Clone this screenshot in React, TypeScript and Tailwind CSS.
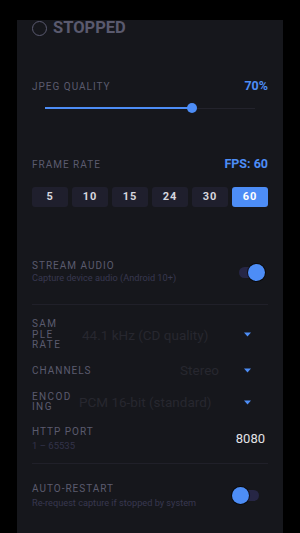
import React from "react";

const BLUE = "bg-[#4d8df6]";

function Label({ children }: { children: React.ReactNode }) {
  return (
    <div className="text-[10px] leading-[12px] tracking-[0.1em] text-[#5b5b6e] uppercase">
      {children}
    </div>
  );
}

function Caret() {
  return (
    <svg width="7" height="5" viewBox="0 0 7 5" className="shrink-0">
      <path d="M0 0.5 L7 0.5 L3.5 4.5 Z" fill="#4d8df6" />
    </svg>
  );
}

function Toggle({ on }: { on: boolean }) {
  return (
    <div className="relative w-[34px] h-[18px] mr-[2px] flex items-center">
      <div className="absolute left-[7px] right-[7px] h-[11px] rounded-full bg-[#262645]" />
      <div
        className={`absolute top-[0.5px] w-[17px] h-[17px] rounded-full ${BLUE} shadow-[0_0_0_1px_rgba(0,0,0,0.6)] ${
          on ? "left-[16px]" : "left-0"
        }`}
      />
    </div>
  );
}

export default function App() {
  const rates = [5, 10, 15, 24, 30, 60];
  return (
    <div
      className="w-[300px] h-[533px] bg-black overflow-hidden pt-[20px]"
      style={{ fontFamily: "Roboto, 'Noto Sans', sans-serif" }}
    >
      <div className="ml-[17px] w-[266px] h-[513px] bg-[#16171c] px-[15px]">
        {/* status */}
        <div className="h-[16px] flex items-center gap-[6px]">
          <div className="w-[15px] h-[15px] rounded-full border-[1.5px] border-[#5a5a70]" />
          <span className="text-[16.5px] leading-[16px] font-bold text-[#5a5a6e]">
            STOPPED
          </span>
        </div>

        {/* jpeg quality */}
        <div className="mt-[44px] h-[13px] flex items-center justify-between">
          <Label>JPEG Quality</Label>
          <span className="text-[12.5px] font-bold text-[#4d8df6]">70%</span>
        </div>
        <div className="mt-[10px] h-[10px] mx-[13px] relative flex items-center">
          <div className="absolute left-0 right-0 h-[1px] bg-[#23232c]" />
          <div className="absolute left-0 w-[147px] h-[2px] bg-[#4d8df6]" />
          <div className="absolute left-[142px] w-[10px] h-[10px] rounded-full bg-[#4d8df6]" />
        </div>

        {/* frame rate */}
        <div className="mt-[45px] h-[13px] flex items-center justify-between">
          <Label>Frame Rate</Label>
          <span className="text-[12.5px] font-bold text-[#4d8df6]">FPS: 60</span>
        </div>
        <div className="mt-[16px] grid grid-cols-6 gap-[4px]">
          {rates.map((r) => (
            <div
              key={r}
              className={`h-[20px] rounded-[3px] flex items-center justify-center text-[11px] font-bold tracking-[0.08em] ${
                r === 60 ? "bg-[#4d8df6] text-white" : "bg-[#1f1f2d] text-[#d6d6de]"
              }`}
            >
              {r}
            </div>
          ))}
        </div>

        {/* stream audio */}
        <div className="mt-[53px] flex items-center justify-between">
          <div>
            <Label>Stream Audio</Label>
            <div className="text-[9.2px] leading-[12px] text-[#383850]">
              Capture device audio (Android 10+)
            </div>
          </div>
          <Toggle on />
        </div>

        <div className="mt-[20px] h-px bg-[#202029]" />

        {/* sample rate */}
        <div className="mt-[14px] flex items-center">
          <div className="w-[50px] text-[10px] leading-[10.5px] tracking-[0.14em] text-[#5b5b6e]">
            SAM
            <br />
            PLE
            <br />
            RATE
          </div>
          <div className="flex-1 text-[13.5px] text-[#27272f]">44.1 kHz (CD quality)</div>
          <Caret />
          <div className="w-[17px]" />
        </div>

        {/* channels */}
        <div className="mt-[14px] h-[12px] flex items-center">
          <Label>Channels</Label>
          <div className="flex-1 text-right pr-[25px] text-[13.5px] text-[#27272f]">Stereo</div>
          <Caret />
          <div className="w-[17px]" />
        </div>

        {/* encoding */}
        <div className="mt-[15px] flex items-center">
          <div className="w-[47px] text-[10px] leading-[10.5px] tracking-[0.14em] text-[#5b5b6e]">
            ENCOD
            <br />
            ING
          </div>
          <div className="flex-1 text-[13.5px] text-[#27272f]">PCM 16-bit (standard)</div>
          <Caret />
          <div className="w-[17px]" />
        </div>

        {/* http port */}
        <div className="mt-[13px] flex items-center justify-between">
          <div>
            <Label>HTTP Port</Label>
            <div className="mt-[2px] text-[9.5px] leading-[12px] text-[#33334a]">1 – 65535</div>
          </div>
          <span className="mr-[3px] text-[13px] text-[#e2e2e6]">8080</span>
        </div>

        <div className="mt-[11px] h-px bg-[#202029]" />

        {/* auto restart */}
        <div className="mt-[19px] flex items-center justify-between">
          <div>
            <Label>Auto-Restart</Label>
            <div className="mt-[2px] text-[9.2px] leading-[12px] text-[#383850]">
              Re-request capture if stopped by system
            </div>
          </div>
          <Toggle on={false} />
        </div>
      </div>
    </div>
  );
}
